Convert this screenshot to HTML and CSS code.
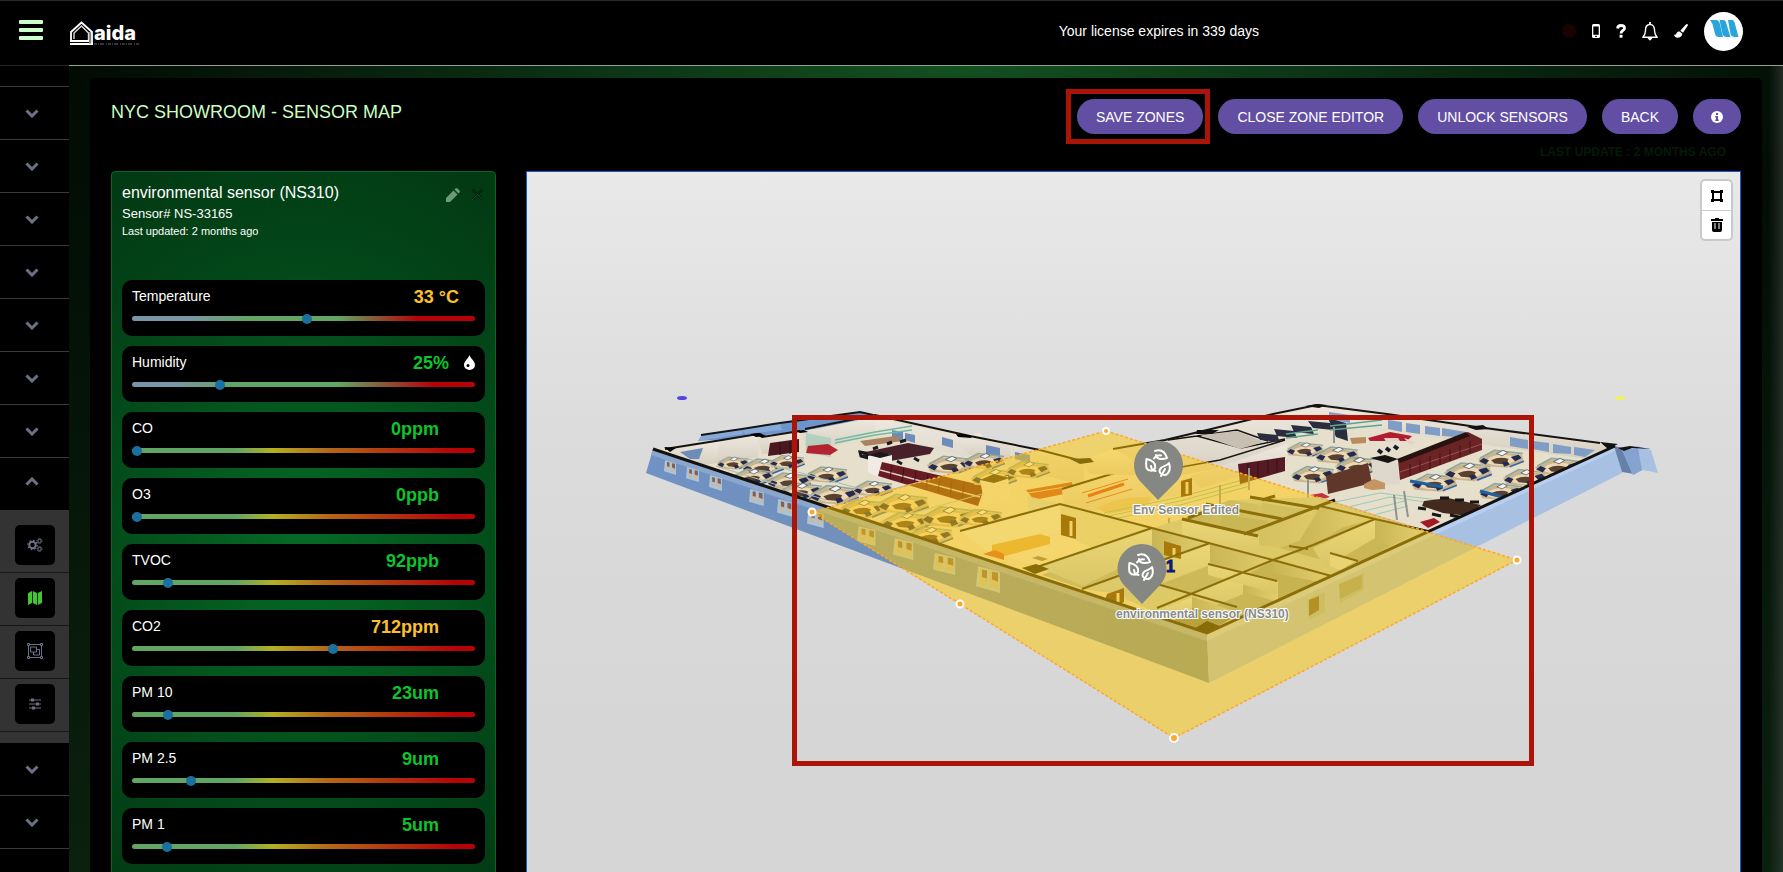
FILE: index.html
```html
<!DOCTYPE html>
<html lang="en">
<head>
<meta charset="utf-8">
<title>aida - Sensor Map</title>
<link rel="stylesheet" href="styles.css">
</head>
<body>
<svg class="defs" aria-hidden="true">
  <symbol id="down" viewBox="0 0 14 9"><path d="M1.500 1.500 7 7 12.500 1.500" fill="none" stroke="currentColor" stroke-width="3"/></symbol>
  <symbol id="up" viewBox="0 0 14 9"><path d="M1.500 7.500 7 2 12.500 7.500" fill="none" stroke="currentColor" stroke-width="3"/></symbol>
  <symbol id="leaves" viewBox="0 0 26 28">
    <g fill="none" stroke="#fff" stroke-width="2" stroke-linecap="round" stroke-linejoin="round">
      <path d="M10 2C16 0 20 3 22 9 16 11 11 10 11 6M9 9.500q3-4 7-3"/>
      <path d="M1.500 10C7 11 11 14 10 19 8 23 3 22 1.500 19 1 16 1 13 1.500 10zM6 17l1 4 3.500 1"/>
      <path d="M24 14C26 20 24 25 20 26 15 26 13 22 16 19 18 17 22 17 24 14zM20 20l-4 7"/>
    </g>
  </symbol>
  <symbol id="desk" viewBox="0 0 44 20">
    <path d="M1 11 15 4l26 3 2 6-15 6-24-2z" fill="#c8b590"/>
    <path d="M3 10 16 3l26 3" fill="none" stroke="#8fa89a" stroke-width="1.500"/>
    <path d="M8 12q9-7 24-4l3 4q-11 8-25 3z" fill="#ead9b4"/>
    <path d="M13 12q8-4 16-1l-3 5-10-1z" fill="#594131"/>
    <path d="M18 6l6-3 4 2-5 3z" fill="#f3f4f8" stroke="#353943" stroke-width=".6"/>
    <path d="M2 13l4-3 5 2-3 4zM31 9l7-2 3 3-6 3zM23 14l5-1 2 3-5 2z" fill="#252b50"/>
    <path d="M30 18l13-5" stroke="#3564a8" stroke-width="1.500"/>
  </symbol>
  <symbol id="win" viewBox="0 0 26 24" preserveAspectRatio="none">
    <path d="M2 0l22 5v19L0 18z" fill="#a9c4dd"/><path d="M4 2l7 2v14l-7-2zM14 4l8 2v14l-8-2z" fill="#c5bba8"/><path d="M6 3l5 1v7l-5-1zM16 5l6 1v8l-6-2z" fill="#7c625a"/>
  </symbol>
</svg>

<div class="app">
  <header class="topbar">
    <button class="burger" aria-label="Menu"><span></span><span></span><span></span></button>
    <a class="logo" href="#" aria-label="aida">
      <svg class="house" viewBox="0 0 23 24"><path d="M1 21V11L11.500 1.500 22 11v12" fill="none" stroke="#fff" stroke-width="1.800"/><path d="M4 18V12l7.500-7L18.500 12v7" fill="none" stroke="#ddd" stroke-width="1.400"/><path d="M0 20h19M0 23h23" stroke="#fff" stroke-width="1.800"/><path d="M20 11v12" stroke="#aaa" stroke-width="1.500"/></svg>
      <span class="wordmark">aida<svg class="tag" viewBox="0 0 46 2"><path d="M0 1h46" stroke="#666" stroke-dasharray="3 1 1 1 4 2 1 1"/></svg></span>
    </a>
    <p class="license">Your license expires in 339 days</p>
    <nav class="tools" aria-label="Account">
      <span class="dot"></span>
      <button aria-label="Mobile"><svg width="8" height="14" viewBox="0 0 8 14"><rect width="8" height="14" rx="1.500" fill="#fff"/><path d="M1.300 2.500h5.400v8.300H1.300z" fill="#000"/><path d="M3 12.400h2" stroke="#000"/></svg></button>
      <button aria-label="Help"><svg width="10" height="14" viewBox="0 0 10 14"><path d="M1.500 4.500C1.800 2.500 3.200 1.500 5 1.500c2 0 3.500 1 3.500 2.800C8.500 6.500 5 6.500 5 9.500" fill="none" stroke="#fff" stroke-width="2.800"/><path d="M3.600 10.800h2.900v2.900H3.600z" fill="#fff"/></svg></button>
      <button aria-label="Alerts"><svg width="16" height="19" viewBox="0 0 16 19"><path d="M.8 15.200c2.700-2.200 2.500-4.200 2.700-7.200 0-3 1.500-5.500 4.500-5.500s4.500 2.500 4.500 5.500c.2 3 0 5 2.700 7.200z" fill="none" stroke="#fff" stroke-width="1.400" stroke-linejoin="round"/><path d="M8 0v3" stroke="#fff" stroke-width="1.800"/><path d="M6 16q2 4 4 0z" fill="#fff" stroke="#fff"/></svg></button>
      <button aria-label="Theme"><svg width="14" height="14" viewBox="0 0 14 14"><path d="M13.500.3c.6.500.4 1.200 0 1.800L9 8.800 6.300 6.700 11.700.8c.5-.6 1.200-.9 1.800-.5zM5.600 7.500l2.700 2.200C8 12.500 6 13.800 3.500 13.800 1.300 13.800.3 12.200 0 10.500c1.400 1 2-.2 2.600-1.500.6-1.100 1.700-1.700 3-1.500z" fill="#fff"/></svg></button>
      <button aria-label="Profile"><svg width="39" height="39" viewBox="0 0 39 39"><circle cx="19.500" cy="19.500" r="19.500" fill="#fff"/><g fill="#2aa5dc"><path d="M6 8h6q3 0 4 4l3 13h-4q-3 0-4-3L8.500 12z"/><path d="M15.500 8h4q2 0 3 4l4 13h-4q-3 0-4-3z"/><path d="M24 8h4q2 0 3 4l3.500 13h-4q-3 0-4-3z"/></g></svg></button>
    </nav>
  </header>

  <div class="body">
    <nav class="side" aria-label="Main">
      <div class="stub"></div>
      <button class="row" aria-label="Section 1"><svg><use href="#down"/></svg></button>
      <button class="row" aria-label="Section 2"><svg><use href="#down"/></svg></button>
      <button class="row" aria-label="Section 3"><svg><use href="#down"/></svg></button>
      <button class="row" aria-label="Section 4"><svg><use href="#down"/></svg></button>
      <button class="row" aria-label="Section 5"><svg><use href="#down"/></svg></button>
      <button class="row" aria-label="Section 6"><svg><use href="#down"/></svg></button>
      <button class="row" aria-label="Section 7"><svg><use href="#down"/></svg></button>
      <button class="row open" aria-label="Section 8"><svg><use href="#up"/></svg></button>
      <div class="sub">
        <div class="subitem"><a href="#" aria-label="Settings"><svg viewBox="0 0 16 16" fill="none" stroke="currentColor"><circle cx="5.500" cy="8" r="3.200" stroke-width="2"/><circle cx="5.500" cy="8" r="4.600" stroke-width="1.400" stroke-dasharray="1.600 2"/><circle cx="12.500" cy="4" r="1.700"/><circle cx="12.500" cy="4" r="2.600" stroke-dasharray="1 1"/><circle cx="12.500" cy="12" r="1.700"/><circle cx="12.500" cy="12" r="2.600" stroke-dasharray="1 1"/></svg></a></div>
        <div class="subitem current"><a href="#" aria-label="Map"><svg viewBox="0 0 16 16" fill="currentColor"><path d="M1 3l4-2v12l-4 2zM5.800 1l4.200 2v12l-4.200-2zM10.800 3 15 1v12l-4.200 2z"/></svg></a></div>
        <div class="subitem"><a href="#" aria-label="Groups"><svg viewBox="0 0 16 16" fill="none" stroke="currentColor"><path d="M1.500 3v10M14.500 3v10M3 1.500h10M3 14.500h10"/><path d="M.5.500h2v2h-2zM13.500.500h2v2h-2zM.5 13.500h2v2h-2zM13.500 13.500h2v2h-2zM3.500 4h6v5h-6z"/><path d="M9.500 6.500h3v5.500h-6V9"/></svg></a></div>
        <div class="subitem"><a href="#" aria-label="Controls"><svg viewBox="0 0 16 16" fill="currentColor"><path d="M2 3.500h12v1H2zM2 7.500h12v1H2zM2 11.500h12v1H2zM4 2.500h3v3H4zM9 6.500h3v3H9zM5 10.500h3v3H5z"/></svg></a></div>
      </div>
      <button class="row" aria-label="Section 9"><svg><use href="#down"/></svg></button>
      <button class="row" aria-label="Section 10"><svg><use href="#down"/></svg></button>
    </nav>

    <main class="page">
      <section class="panel">
        <div class="head">
          <h1>NYC SHOWROOM - SENSOR MAP</h1>
          <div class="actions">
            <div class="marked"><button class="pill">SAVE ZONES</button></div>
            <button class="pill">CLOSE ZONE EDITOR</button>
            <button class="pill">UNLOCK SENSORS</button>
            <button class="pill">BACK</button>
            <button class="pill icon" aria-label="Info"><svg width="12" height="12" viewBox="0 0 12 12"><circle cx="6" cy="6" r="6" fill="#fff"/><path d="M5 2h2v2H5zM4.300 5H7v3.500h.7V10H4.300V8.500H5v-2h-.7z" fill="#624fa3"/></svg></button>
          </div>
        </div>
        <p class="updated">LAST UPDATE : 2 MONTHS AGO</p>

        <div class="columns">
          <article class="card">
            <div class="cardhead">
              <div>
                <h2>environmental sensor (NS310)</h2>
                <p class="serial">Sensor# NS-33165</p>
                <p class="ago">Last updated: 2 months ago</p>
              </div>
              <div class="cardtools">
                <button aria-label="Edit"><svg width="14" height="14" viewBox="0 0 14 14"><path d="M0 14V10L7.500 2.500l4 4L4 14zM8.500 1.500l1-1q1-.9 2 0L13.500 2.500q.9 1 0 2l-1 1z" fill="#6c9b78"/></svg></button>
                <button aria-label="Close"><svg width="13" height="13" viewBox="0 0 13 13"><path d="M1.500 1.500l10 10M11.500 1.500l-10 10" stroke="#04280f" stroke-width="3"/><path d="M1.500 11.500l5-5 5 5" fill="none" stroke="#2b6b3b" stroke-width="1" stroke-dasharray="1 1"/></svg></button>
              </div>
            </div>
            <div class="metrics">
              <div class="metric temp"><div class="line"><label for="m1">Temperature</label><output class="warn">33 °C</output></div><input id="m1" type="range" step="any" value="51"></div>
              <div class="metric hum"><div class="line"><label for="m2">Humidity</label><output>25%</output><svg width="11" height="15" viewBox="0 0 11 15"><path d="M5.500 0C6.500 3.500 11 6 11 10a5.500 5 0 0 1-11 0C0 6 4.500 3.500 5.500 0z" fill="#fff"/><circle cx="4" cy="10.500" r="1.500"/></svg></div><input id="m2" type="range" step="any" value="25"></div>
              <div class="metric"><div class="line"><label for="m3">CO</label><output>0ppm</output></div><input id="m3" type="range" step="any" value="0"></div>
              <div class="metric"><div class="line"><label for="m4">O3</label><output>0ppb</output></div><input id="m4" type="range" step="any" value="0"></div>
              <div class="metric"><div class="line"><label for="m5">TVOC</label><output>92ppb</output></div><input id="m5" type="range" step="any" value="9.3"></div>
              <div class="metric"><div class="line"><label for="m6">CO2</label><output class="warn">712ppm</output></div><input id="m6" type="range" step="any" value="58.8"></div>
              <div class="metric"><div class="line"><label for="m7">PM 10</label><output>23um</output></div><input id="m7" type="range" step="any" value="9.3"></div>
              <div class="metric"><div class="line"><label for="m8">PM 2.5</label><output>9um</output></div><input id="m8" type="range" step="any" value="16.2"></div>
              <div class="metric"><div class="line"><label for="m9">PM 1</label><output>5um</output></div><input id="m9" type="range" step="any" value="9"></div>
            </div>
          </article>

          <div class="map">
            <svg class="plan" viewBox="527 172 1213 700" preserveAspectRatio="xMinYMin meet" role="img" aria-label="Floor plan with sensor zone">
              <defs>
                <linearGradient id="lw" x1="0" x2="1"><stop offset="0" stop-color="#7092c4"/><stop offset="1" stop-color="#738da8"/></linearGradient>
                <linearGradient id="wl" x1="0" y1="0" x2="0" y2="1"><stop offset="0" stop-color="#eee8df"/><stop offset="1" stop-color="#d6cec0"/></linearGradient>
                <linearGradient id="nw" x1="0" y1="0" x2="0" y2="1"><stop offset="0" stop-color="#d8e6ee"/><stop offset="1" stop-color="#b4c4cc"/></linearGradient>
                <linearGradient id="ns" x1="0" y1="0" x2="1" y2="0"><stop offset="0" stop-color="#92a3a8"/><stop offset="1" stop-color="#c4d3da"/></linearGradient>
              </defs>
              <!-- floor -->
              <path d="M653 449 702 441 800 426 875 414 1040 449 1082 460 1113 449 1207 430 1317 405 1615 446 1207 633Z" fill="#e6dfcc"/>
              <path d="M698 441 702 435 742 429 780 423 860 412 878 416 805 431 758 437Z" fill="#6d95cc"/>
              <path d="M698 441 702 435 742 429 743 434 705 440M745 434 742 429 780 423 782 430" fill="#86a9d8"/>
              <path d="M701 435 742 429 780 423 860 412 873 415" fill="none" stroke="#151515" stroke-width="2"/>
              <!-- far walls, left wing -->
              <g fill="url(#wl)">
                <path d="M664 448 722 440V462L700 466Z"/><path d="M720 440 758 434V457L716 463Z"/><path d="M758 436 800 431V450L762 454Z"/>
                <path d="M803 431 875 418V433L830 447 806 450Z"/><path d="M875 418 975 439 1040 452 1084 463V486L1040 474 960 455 875 434Z"/>
                <path d="M952 437 980 433 985 440 1010 446V460L970 455Z"/>
              </g>
              <path d="M665 449 722 440 758 434 762 437 800 431 M805 429 875 415 970 436 1040 450 1082 461" fill="none" stroke="#15120f" stroke-width="2"/>
              <path d="M664 447l12 1-6 4zM750 434l10-1 6 3-10 1zM796 431l8-1 4 2-8 1zM956 434l12 1 4 3-14-1z"/>
              <g fill="#6d8cb8"><path d="M680 452 703 448 699 459 690 459Z"/><path d="M892 430 903 432V441L892 438ZM905 433 915 435V443L905 440ZM942 437 953 440V448L942 445ZM986 445 1000 448V457L986 454ZM1015 452 1030 455V463L1015 459Z"/></g>
              <path d="M770 443 799 439V452L768 456Z" fill="#4b1820"/><path d="M780 442V455M790 441V454" stroke="#241014"/>
              <path d="M806 433 831 438V457L806 453Z" fill="#a9cdbb" opacity=".8"/><path d="M808 446 828 444 838 450 830 455 806 453Z" fill="#b32430"/>
              <path d="M835 440 875 432 912 426M835 443 875 435 912 430" stroke="#71baa2" stroke-width="1.500" fill="none"/>
              <path d="M860 441 895 436 903 441 865 446Z" fill="#aa8260"/><path d="M861 453 908 443 934 448 930 454 885 462 868 459Z" fill="#47202a"/>
              <path d="M860 452l6 1 2 5-7-2zM873 449l5-2M887 444l5-2M900 442l6-2M880 463l5 3M897 461l5 3M914 458l5 3" stroke="#171923" stroke-width="3" fill="none"/>
              <path d="M868 456 878 453 892 455V463L880 478 868 472Z" fill="#f0ece4"/><path d="M868 455 880 452 892 455 880 458Z" fill="#19191a"/>
              <path d="M882 462 985 486 978 506 878 476Z" fill="#681a25"/><path d="M880 470 980 497" stroke="#e0cdbc" stroke-width="1.500"/><path d="M892 465l-2 14M904 468l-2 15M916 471l-2 15M928 474l-2 16M940 477l-2 16M952 480l-2 17M964 483l-2 17" stroke="#3e1018"/>
              <!-- desks, left wing -->
              <use href="#desk" x="716" y="454" width="34" height="17"/><use href="#desk" x="741" y="456" width="44" height="20"/><use href="#desk" x="768" y="453" width="38" height="17"/>
              <use href="#desk" x="731" y="465" width="44" height="22"/><use href="#desk" x="765" y="470" width="48" height="21"/><use href="#desk" x="805" y="464" width="44" height="20"/>
              <use href="#desk" x="778" y="480" width="46" height="21"/><use href="#desk" x="808" y="482" width="52" height="24"/><use href="#desk" x="852" y="478" width="42" height="20"/>
              <use href="#desk" x="925" y="453" width="50" height="22"/><use href="#desk" x="962" y="450" width="44" height="21"/><use href="#desk" x="970" y="466" width="48" height="22"/><use href="#desk" x="1005" y="458" width="46" height="22"/>
              <use href="#desk" x="838" y="496" width="50" height="24"/><use href="#desk" x="876" y="490" width="54" height="26"/><use href="#desk" x="880" y="508" width="52" height="26"/><use href="#desk" x="920" y="502" width="56" height="28"/><use href="#desk" x="958" y="505" width="46" height="24"/><use href="#desk" x="905" y="524" width="50" height="22"/>
              <path d="M716 466l110 34M745 458l120 32M835 505l95-26M880 522l110-30" stroke="#a9bdb0" fill="none"/>
              <!-- reception -->
              <path d="M980 480 1008 476 1010 500 985 506Z" fill="#e6e2d4"/><path d="M980 480 994 474 1010 478 994 483Z" fill="#332a20"/>
              <path d="M1026 490 1072 482 1074 492 1034 500Z" fill="#c04a32"/><path d="M1028 493l44-7" stroke="#e8c8a8"/>
              <path d="M1027 496 1062 504 1060 512 1028 510Z" fill="#cfd8d8"/>
              <path d="M1062 489 1165 461 1245 454V478L1150 502 1064 516Z" fill="url(#wl)"/><path d="M1062 489 1118 472 1123 472" stroke="#15120f" stroke-width="2" fill="none"/>
              <path d="M1088 496 1124 484" stroke="#d43a26" stroke-width="3"/><path d="M1082 493 1128 479M1086 503 1132 489" stroke="#dc4d38"/>
              <path d="M1096 508Q1125 494 1152 498L1143 508 1108 514Z" fill="#dcc298"/>
              <path d="M1104 513 1180 497 1250 478M1104 517 1180 501 1250 482M1104 521 1180 505 1250 486" stroke="#86b8a0" fill="none"/>
              <path d="M1181 481 1192 478V495L1181 497Z" fill="#4e2914"/><path d="M1187 482v12" stroke="#ded8c0" stroke-width="3"/>
              <!-- right wing walls -->
              <path d="M1082 461 1113 449 1165 462 1190 470 1165 476 1090 474Z" fill="url(#wl)"/><path d="M1070 459 1090 458 1094 462 1080 464Z" fill="#111"/>
              <path d="M1113 449 1165 440 1207 430 1317 407V427L1250 440 1285 443 1288 462 1220 468 1165 478Z" fill="url(#wl)"/>
              <path d="M1168 440 1197 436 1241 448 1285 439M1197 436 1237 430 1268 441" fill="none" stroke="#171513" stroke-width="1.500"/>
              <path d="M1200 435 1237 431 1264 442 1240 449Z" fill="#c8beb2"/>
              <path d="M1113 449 1165 440 1207 430 1273 414 1317 405 1387 414 1477 427 1600 443" fill="none" stroke="#171513" stroke-width="2"/>
              <path d="M1317 407 1387 416 1477 429 1612 446 1595 460 1480 444 1390 430 1317 418Z" fill="url(#wl)"/>
              <path d="M1388 420 1402 422V432L1388 429ZM1406 423 1420 425V434L1406 432ZM1425 426 1440 428V436L1425 434ZM1442 428 1466 432 1455 437 1442 436ZM1510 437 1528 440V449L1510 446ZM1533 441 1549 443V452L1533 449ZM1553 444 1571 447V454L1553 453ZM1574 447 1595 450 1585 457 1574 455ZM1329 412 1350 415V423L1329 419Z" fill="#7f9dc5"/>
              <path d="M1197 430h22l-7 4h-16zM1467 427l16-2 6 4-13 1zM1305 406l12-2 10 1-8 3z" fill="#111"/>
              <g fill="#2a2c40"><path d="M1257 433l20 2 3 7-20-2zM1274 429l20 2 3 7-20-2zM1291 425l20 2 3 7-20-2zM1308 421l22 2 3 7-20-2zM1328 418l18 5 2 18-12-4z"/></g>
              <path d="M1190 476 1287 444V462L1200 488Z" fill="url(#wl)"/><path d="M1165 470 1220 460 1285 440" stroke="#171513" stroke-width="1.500" fill="none"/>
              <path d="M1238 464 1285 457V471L1240 484Z" fill="#551a24"/><path d="M1248 463v17M1258 462v15M1268 460v14M1277 459v13" stroke="#331017"/>
              <path d="M1286 434 1318 430M1286 438 1318 434M1330 426 1382 420M1330 430 1382 425" stroke="#5ea48f" stroke-width="1.500"/>
              <path d="M1368 438 1390 432 1412 436 1407 441 1370 441Z" fill="#b21e2f"/><path d="M1384 438l14 0 2 3-14 1zM1404 438l12 4-6 3z" fill="#e7d2c8"/>
              <path d="M1350 438 1366 437V443L1352 444Z" fill="#b98c5e"/>
              <path d="M1378 450l4 3M1386 448l4 3M1394 446l4 3" stroke="#171a2b" stroke-width="4" fill="none"/>
              <use href="#desk" x="1285" y="440" width="40" height="18"/><use href="#desk" x="1314" y="444" width="46" height="21"/><use href="#desk" x="1290" y="463" width="46" height="22"/><use href="#desk" x="1334" y="454" width="48" height="22"/>
              <!-- shelves and partitions, right wing -->
              <path d="M1398 460 1468 432 1482 439 1482 450 1400 480Z" fill="#6a2426"/><path d="M1397 459 1466 432 1470 436 1400 463Z" fill="#27120f"/><path d="M1400 472 1482 444" stroke="#9d5750"/>
              <path d="M1410 464v12M1420 460v12M1430 456v13M1440 453v12M1450 449v12M1460 445v12M1470 441v12" stroke="#451317"/>
              <path d="M1371 460 1396 459 1400 484 1374 486Z" fill="#ded7cb"/><path d="M1370 458 1385 455 1398 459 1388 463Z" fill="#161412"/>
              <path d="M1326 476 1368 463 1372 483 1328 494Z" fill="#61372a"/><path d="M1364 484 1374 479 1385 483V489L1372 490 1364 488Z" fill="#c39562"/>
              <use href="#desk" x="1410" y="471" width="48" height="22"/><use href="#desk" x="1443" y="459" width="50" height="24"/><use href="#desk" x="1477" y="447" width="48" height="22"/><use href="#desk" x="1478" y="480" width="46" height="22"/><use href="#desk" x="1502" y="466" width="46" height="22"/><use href="#desk" x="1534" y="454" width="48" height="24"/>
              <path d="M1410 481 1443 487M1480 491 1502 497" stroke="#1d60a8" stroke-width="3"/>
              <path d="M1330 503 1380 493 1438 500M1340 509 1390 497 1440 504M1356 513 1405 501M1366 517 1408 506" stroke="#9ccab4" fill="none"/>
              <path d="M1424 501 1448 498 1481 505 1468 516 1443 513 1422 506Z" fill="#44291f"/><path d="M1418 508l8 1M1440 498l9 0M1455 500l9 0M1470 502l9 0M1432 514l9 2M1450 515l9 2" stroke="#161616" stroke-width="3"/>
              <path d="M1420 522l14-4 6 4-12 6z" fill="#a21925"/><path d="M1310 495l12-2 8 4-10 3z" fill="#c0343b"/>
              <path d="M1394 495 1397 520M1404 491 1408 517M1308 479v24M1334 427v16M1249 468v22M1220 485v25M1169 518v12" stroke="#8d9390" stroke-width="2"/>
              <!-- rooms in the near corner -->
              <path d="M960 531 1060 504 1152 528 1182 519 1230 500 1320 497 1428 531 1207 633Z" fill="#bccace"/>
              <path d="M960 531 1060 504V533L990 553Z" fill="#e6e6e0"/><path d="M1060 504 1152 528 1092 548 1060 533Z" fill="#d6d8cc"/><path d="M992 553 1060 533 1092 548 1037 566Z" fill="#e8e4d8"/>
              <path d="M992 545 1040 534 1050 537V544L1005 556 992 553Z" fill="#d6a860"/><path d="M983 554l12-4 9 4v6z" fill="#d05a34"/><path d="M1032 558l6-2 10 3-6 2z" fill="#7a7a70"/>
              <path d="M1061 514 1076 518V539L1061 535Z" fill="#4e2914"/><path d="M1071 521v15" stroke="#e4dfc8" stroke-width="3"/>
              <path d="M1182 519 1230 500 1262 505 1345 524 1280 548 1182 532Z" fill="url(#ns)"/>
              <path d="M1182 519 1259 536V558L1182 534Z" fill="url(#nw)"/>
              <path d="M1222 515 1270 521 1247 532 1220 525Z" fill="#93a5a8"/><path d="M1262 503 1310 510 1283 519 1262 514Z" fill="#a2b4b8"/>
              <path d="M1182 519 1258 536M1188 518 1210 510M1250 497 1322 509M1262 500 1275 496M1244 534 1335 500M1206 504 1282 519" stroke="#181613" stroke-width="3" fill="none"/>
              <path d="M1152 528 1210 543 1083 589 1042 575Z" fill="#9fb0b4"/><path d="M1152 528 1210 543V557L1152 552Z" fill="url(#ns)"/><path d="M1037 567 1152 528V552L1083 586Z" fill="url(#nw)"/>
              <path d="M1210 543 1273 560 1192 593 1143 580 1105 591 1083 589Z" fill="#9aabae"/><path d="M1083 589 1210 543V565L1130 596Z" fill="url(#nw)"/><path d="M1210 543 1273 560 1240 573 1210 565Z" fill="url(#ns)"/>
              <path d="M1164 541 1181 546V559L1164 555Z" fill="#4e2914"/><path d="M1174 548v9" stroke="#ded8c0" stroke-width="3"/>
              <path d="M1107 594 1124 588V602L1115 607 1105 601Z" fill="#4e2914"/><path d="M1118 593v10" stroke="#ded8c0" stroke-width="3"/>
              <path d="M1192 593 1243 573 1278 582V610L1230 618Z" fill="#93a4a8"/><path d="M1192 593 1243 573V594L1210 608Z" fill="url(#nw)"/><path d="M1243 573 1278 582V602L1243 592Z" fill="url(#ns)"/>
              <path d="M1208 564 1277 581V594L1208 575Z" fill="url(#nw)"/>
              <path d="M1273 560 1335 577 1278 602 1278 582 1250 573Z" fill="#8fa0a3"/><path d="M1273 560 1330 574V584L1273 573Z" fill="url(#ns)"/>
              <path d="M1145 614 1192 597 1237 615 1207 633Z" fill="#6f7d7c"/><path d="M1145 614 1192 597V612L1170 622Z" fill="url(#nw)"/><path d="M1192 597 1237 612V620L1192 608Z" fill="url(#ns)"/>
              <path d="M1280 548 1320 533 1375 519 1420 530 1350 568Z" fill="#97a8ab"/><path d="M1313 548 1375 519V538L1325 568Z" fill="url(#nw)"/><path d="M1375 519 1421 531 1390 546 1375 538Z" fill="url(#ns)"/>
              <path d="M1320 507 1360 516 1313 546 1300 540Z" fill="url(#ns)"/><path d="M1330 553 1358 560 1340 570 1330 566Z" fill="#d2dfe6"/>
              <path d="M960 531 1060 504 1152 528 1273 560 1335 577M1152 528 1037 567M1082 589 1210 543M1143 580 1237 607M1157 608 1273 560 1313 545 1375 519M1208 564 1277 581M1320 506 1375 519 1428 531M1289 546 1308 549M1330 553 1358 561" fill="none" stroke="#181613" stroke-width="2"/>
              <path d="M1022 568 1036 564 1049 569 1035 574ZM1192 630 1207 621 1222 627 1207 634Z" fill="#111"/>
              <!-- outer walls -->
              <path d="M653 449 1207 633 1209 683 646 473Z" fill="url(#lw)"/><path d="M653 449 1207 633V641L651 455Z" fill="#8aa6cd"/>
              <path d="M1207 633 1615 446 1622 473 1209 683Z" fill="#a8c1e3"/><path d="M1207 633 1615 446 1617 450 1207 641Z" fill="#b8cef0"/>
              <path d="M1614 446 1628 449 1634 474 1622 472Z" fill="#6680a9"/><path d="M1622 450 1638 446 1651 450 1658 473 1643 470 1633 475Z" fill="#a8c1e3"/><path d="M1622 450 1638 448 1642 470 1633 475Z" fill="#86a3cf"/>
              <path d="M653 449 1207 633 1615 446" fill="none" stroke="#141210" stroke-width="3"/><path d="M1600 442 1618 444 1608 449ZM1618 448 1630 446 1651 449 1632 448 1624 451Z" fill="#111"/>
              <use href="#win" x="664" y="460" width="13" height="15"/><use href="#win" x="686" y="467" width="14" height="15"/><use href="#win" x="709" y="475" width="14" height="16"/><use href="#win" x="749" y="489" width="16" height="17"/><use href="#win" x="777" y="499" width="17" height="18"/><use href="#win" x="807" y="510" width="18" height="18"/><use href="#win" x="857" y="526" width="20" height="20"/><use href="#win" x="893" y="538" width="22" height="22"/><use href="#win" x="933" y="553" width="24" height="22"/><use href="#win" x="976" y="566" width="26" height="27"/>
              <path d="M1307 599 1325 592V612L1309 620Z" fill="#9ab5c8"/><path d="M1309 600 1319 596V610L1309 616Z" fill="#665a44"/><path d="M1339 584 1364 573V590L1340 603Z" fill="#9ab5c8"/><path d="M1339 584 1362 575V588L1340 599Z" fill="#8f9a94"/>
              <!-- zone -->
              <path d="M812 512 1106 431 1517 560 1174 738 960 604Z" fill="#ffc800" fill-opacity=".5" stroke="#ffa726" stroke-width="1.500" stroke-dasharray="3 2"/>
              <g fill="#ffa82e" stroke="#fff" stroke-width="2"><circle cx="812" cy="512" r="3.500"/><circle cx="1106" cy="431" r="3"/><circle cx="1517" cy="560" r="3.500"/><circle cx="1174" cy="738" r="4"/><circle cx="960" cy="604" r="3.500"/></g>
              <ellipse cx="682" cy="398" rx="5" ry="2" fill="#5545e4"/><ellipse cx="1620" cy="398" rx="5" ry="2" fill="#f0ef5e"/>
              <!-- sensors -->
              <text class="one" x="1166" y="572">1</text>
              <g fill="#848782"><path d="M1158 500 1139 480A24.500 24.500 0 1 1 1178 480Z"/><path d="M1142 604 1123 584A24.500 24.500 0 1 1 1161 584Z"/></g>
              <use href="#leaves" x="1145" y="449" width="26" height="28"/><use href="#leaves" x="1128" y="553" width="26" height="28"/>
              <text class="pin" x="1133" y="514">Env Sensor Edited</text>
              <text class="pin" x="1116" y="618">environmental sensor (NS310)</text>
              <rect x="794.500" y="417.500" width="737" height="346" fill="none" stroke="#ab1507" stroke-width="5"/>
            </svg>
            <div class="draw">
              <button aria-label="Edit layers"><svg width="12" height="12" viewBox="0 0 12 12"><path d="M2 0v12M10 0v12M0 2h12M0 10h12" stroke="#000" stroke-width="2"/><path d="M0 0h3v3H0zM9 0h3v3H9zM0 9h3v3H0zM9 9h3v3H9z"/></svg></button>
              <button aria-label="Delete layers"><svg width="12" height="14" viewBox="0 0 12 14"><path d="M4 0h4v1h4v2H0V1h4zM1 4h10v8q0 2-2 2H3q-2 0-2-2z"/><path d="M4 5v6M8 5v6" stroke="#fff"/></svg></button>
            </div>
          </div>
        </div>
      </section>
    </main>
  </div>
</div>
</body>
</html>
```

FILE: styles.css
```css
* { box-sizing: border-box; }
body { margin: 0; background: #000; color: #fff; font-family: "Liberation Sans", Arial, sans-serif; font-size: 14px; }
h1, h2, p { margin: 0; font-weight: 400; }
button { padding: 0; border: 0; background: none; color: inherit; font: inherit; cursor: pointer; }
svg { display: block; }
.defs { position: absolute; width: 0; height: 0; }

.app { display: flex; flex-direction: column; height: 100vh; overflow: hidden; }

.topbar { display: flex; align-items: center; flex: 0 0 65px; padding: 0 40px 4px 19px; border-top: 1px solid #2b2b2e; }
.burger { display: flex; flex-direction: column; gap: 4px; width: 24px; margin: 0 27px 2px 0; }
.burger span { height: 4px; border-radius: 1px; background: #ccffcc; }
.logo { display: flex; align-items: flex-end; gap: 1px; color: #fff; text-decoration: none; padding-top: 3px; }
.house { width: 23px; height: 24px; }
.wordmark { font: 800 20px/19px Inter, sans-serif; }
.tag { width: 46px; height: 2px; }
.license { margin-left: auto; margin-right: 303px; }
.tools { display: flex; align-items: center; gap: 16px; }
.dot { width: 14px; height: 14px; border-radius: 50%; background: #180202; }

.body { display: flex; flex: 1; min-height: 0; }

.side { flex: 0 0 69px; border-top: 1px solid #242424; overflow: hidden; }
.stub { height: 21px; border-bottom: 1px solid #3a3a3a; }
.row { display: flex; align-items: center; width: 100%; height: 53px; padding: 1px 0 0 25px; border-bottom: 1px solid #3a3a3a; color: #6b7186; }
.row.open { height: 52px; border-bottom: 0; padding-bottom: 6px; }
.row svg { width: 14px; height: 9px; }
.sub { padding: 10px 0 11px; background: #333; }
.subitem { height: 53px; padding: 5px 0 0 15px; border-bottom: 1px solid #161616; }
.subitem a { display: grid; place-items: center; width: 40px; height: 40px; border-radius: 5px; background: #000; color: #6b7186; }
.subitem.current a { color: #45c436; }
.subitem svg { width: 16px; height: 16px; }

.page {
  flex: 1;
  min-width: 0;
  padding: 12px 21px 0;
  border-top: 1px solid #95a095;
  background:
    linear-gradient(to left, rgba(60, 66, 62, .55), transparent 14px),
    radial-gradient(ellipse 52% 240px at 52% 0, #135020, transparent),
    linear-gradient(#020a04, #0a210f);
}
.panel { min-height: 100%; padding: 21px; border-radius: 5px 5px 0 0; background: #000; }

.head { display: flex; justify-content: space-between; align-items: flex-start; }
h1 { font-size: 18px; line-height: 26px; color: #ccffc4; }
.actions { display: flex; gap: 15px; }
.pill { display: flex; align-items: center; height: 35px; padding: 0 19px; border-radius: 18px; background: #624fa3; color: #fff; }
.pill.icon { padding: 0 18px; }
.marked { position: relative; }
.marked::after { content: ""; position: absolute; inset: -10px -7px -10px -11px; border: 5px solid #ab1507; pointer-events: none; }
.updated { margin: 10px 15px 10px 0; text-align: right; font-size: 12px; line-height: 17px; font-weight: 700; color: #041a09; }

.columns { display: flex; gap: 30px; }
.card {
  flex: 0 0 385px;
  padding: 10px 10px 30px;
  border: 1px solid #046a23;
  border-radius: 4px;
  background: radial-gradient(ellipse 340px 420px at 50% 375px, #056a25, #034819 65%, #023a13);
}
.cardhead { display: flex; justify-content: space-between; height: 98px; }
h2 { font-size: 16px; line-height: 22px; }
.serial { font-size: 13px; line-height: 20px; }
.ago { font-size: 11px; line-height: 15px; }
.cardtools { display: flex; align-items: flex-start; gap: 11px; padding: 6px 1px 0 0; }

.metrics { display: flex; flex-direction: column; gap: 10px; }
.metric { height: 56px; padding: 6px 10px; border-radius: 10px; background: #000; }
.line { display: flex; justify-content: space-between; align-items: flex-start; height: 30px; line-height: 20px; }
.line output { margin-left: auto; padding-right: 36px; font-size: 18px; line-height: 22px; font-weight: 700; color: #0cc42b; }
.line .warn { color: #fdc02a; }
.temp output { padding-right: 16px; }
.hum output { padding-right: 15px; }
.line svg { margin-top: 3px; }

.metric input {
  --scale: #61a662 30%, #b4b021 41%, #b4681a 57%, #b33a0f 74%, #b60306 94%;
  display: block;
  width: 100%;
  height: 5px;
  margin: 0;
  border-radius: 3px;
  appearance: none;
  background: linear-gradient(to right, var(--scale));
}
.temp input { --scale: #7896a5 17%, #61a662 35%, #61a662 60%, #b60306 83%; }
.hum input { --scale: #7896a5 12%, #61a662 30%, #61a662 60%, #b60306 88%; }
.metric input::-webkit-slider-thumb { appearance: none; width: 10px; height: 10px; border-radius: 50%; background: #1a719f; }

.map { position: relative; flex: 1; min-width: 0; border: 1px solid #1459d6; background: linear-gradient(#e9e9e9, #dcdcdc 35%, #d6d6d6 75%); }
.plan { width: 100%; height: auto; }
.pin { font-size: 12px; font-weight: 700; fill: #878b87; stroke: #fff; stroke-width: 2px; paint-order: stroke; }
.one { font-size: 16px; font-weight: 700; fill: #06159c; stroke: #222; stroke-width: 1px; paint-order: stroke; }
.draw { position: absolute; top: 7px; right: 7px; border: 2px solid #c9c9c9; border-radius: 5px; background: #fff; color: #000; }
.draw button { display: grid; place-items: center; width: 29px; height: 29px; }
.draw button + button { border-top: 1px solid #ccc; }
```
